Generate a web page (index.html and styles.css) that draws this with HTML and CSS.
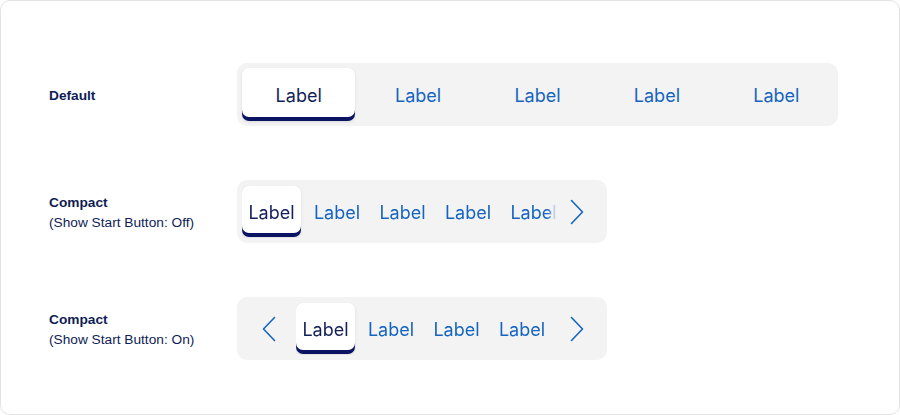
FILE: index.html
```html
<!DOCTYPE html>
<html>
<head>
<meta charset="utf-8">
<link rel="stylesheet" href="styles.css">
</head>
<body>
<div class="frame">
  <div class="row">
    <div class="row-label"><div class="title">Default</div></div>
    <div class="bar bar-default">
      <div class="tab selected">Label</div>
      <div class="tab">Label</div>
      <div class="tab">Label</div>
      <div class="tab">Label</div>
      <div class="tab">Label</div>
    </div>
  </div>
  <div class="row">
    <div class="row-label"><div class="title">Compact</div><div class="sub">(Show Start Button: Off)</div></div>
    <div class="bar bar-compact">
      <div class="viewport">
        <div class="tab selected">Label</div>
        <div class="tab">Label</div>
        <div class="tab">Label</div>
        <div class="tab">Label</div>
        <div class="tab">Label</div>
      </div>
      <div class="nav next"><svg width="14" height="26" viewBox="0 0 14 26"><path d="M1.5 1.5 L12.5 13 L1.5 24.5" fill="none" stroke="#1565c0" stroke-width="1.6" stroke-linecap="round" stroke-linejoin="round"/></svg></div>
    </div>
  </div>
  <div class="row">
    <div class="row-label"><div class="title">Compact</div><div class="sub">(Show Start Button: On)</div></div>
    <div class="bar bar-compact">
      <div class="nav prev"><svg width="14" height="26" viewBox="0 0 14 26"><path d="M12.5 1.5 L1.5 13 L12.5 24.5" fill="none" stroke="#1565c0" stroke-width="1.6" stroke-linecap="round" stroke-linejoin="round"/></svg></div>
      <div class="viewport">
        <div class="tab selected">Label</div>
        <div class="tab">Label</div>
        <div class="tab">Label</div>
        <div class="tab">Label</div>
      </div>
      <div class="nav next"><svg width="14" height="26" viewBox="0 0 14 26"><path d="M1.5 1.5 L12.5 13 L1.5 24.5" fill="none" stroke="#1565c0" stroke-width="1.6" stroke-linecap="round" stroke-linejoin="round"/></svg></div>
    </div>
  </div>
</div>
</body>
</html>
```
FILE: styles.css
```css
* { box-sizing: border-box; }
html, body { margin: 0; padding: 0; background: #ffffff; }
body { font-family: "Liberation Sans", Arial, sans-serif; }

.frame {
  width: 900px;
  height: 415px;
  border: 1px solid #e3e3e3;
  border-radius: 10px;
  padding: 62px 0 0 48px;
  display: flex;
  flex-direction: column;
  gap: 54px;
}

.row {
  display: grid;
  grid-template-columns: 188px auto;
  align-items: center;
}

.row-label { color: #0f1d56; font-size: 13.7px; line-height: 20px; padding-top: 2px; }
.row-label .title { font-weight: bold; }
.row-label .sub { font-weight: normal; }

.bar {
  background: #f3f3f3;
  border-radius: 10px;
  height: 63px;
  padding: 5px;
  display: flex;
  align-items: stretch;
}

.bar-default { width: 601px; gap: 6px; }
.bar-default .tab { flex: 1; }

.bar-compact { width: 370px; }

.tab {
  display: flex;
  align-items: center;
  justify-content: center;
  font-family: Inter, "Liberation Sans", sans-serif;
  font-size: 18px;
  color: #1565c0;
  border-radius: 7px;
  flex: none;
  padding-top: 2px;
}

.tab.selected {
  background: #ffffff;
  color: #121f5a;
  box-shadow: inset 0 -4px 0 #0a1462, 0 1px 3px rgba(0,0,0,0.10);
}

.viewport {
  flex: 1;
  display: flex;
  gap: 6.5px;
  overflow: hidden;
  padding: 1px 0;
  -webkit-mask-image: linear-gradient(to right, #000 calc(100% - 10px), transparent);
  mask-image: linear-gradient(to right, #000 calc(100% - 10px), transparent);
}
.viewport .tab { width: 59px; }

.nav {
  flex: none;
  display: flex;
  align-items: center;
  justify-content: center;
}
.nav.next { width: 40px; margin-right: 5px; }
.nav.prev { width: 54px; padding-right: 1px; }
```
